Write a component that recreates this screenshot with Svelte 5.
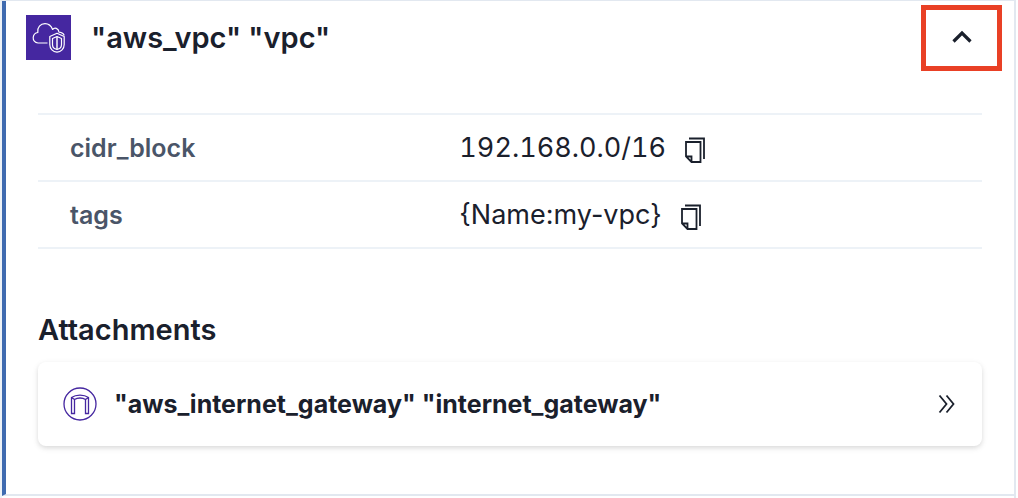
<script>
  const attributes = [
    { name: 'cidr_block', value: '192.168.0.0/16', numeric: true },
    { name: 'tags', value: '{Name:my-vpc}', numeric: false }
  ];
  let open = $state(true);
</script>

<div class="panel">
  <main class="resource">
    <header>
      <svg class="logo" viewBox="0 0 45 45" aria-hidden="true">
        <rect width="45" height="45" fill="#4527a0" />
        <g fill="none" stroke="#fff" stroke-width="1.2" stroke-linejoin="round">
          <path d="M21.500 28H12C8.800 27.500 7 25 7.200 22.500C7.500 19.500 9.500 17.800 11.800 17.500C11 12.500 14.500 8.600 19 8.600C23 8.600 25.300 11 26.600 14.500C28.500 12.200 32.500 13 33 17.200C35.500 17.500 37.500 18.200 38.200 20.500" />
          <path d="M31 18.300L38.200 21.500V29.500C38.200 33.800 35 36.800 31 37.200C27 36.800 23.800 33.800 23.800 29.500V21.500Z" />
          <path d="M31 21.500L35.500 23.500V29.500C35.500 32.200 33.500 34 31 34.500C28.500 34 26.500 32.200 26.500 29.500V23.500Z" />
          <path d="M31 21.500V34.500" stroke-width="1.8" opacity="0.8" />
        </g>
      </svg>
      <h1>"aws_vpc" "vpc"</h1>
      <button class="toggle" aria-label="Toggle details" aria-expanded={open} onclick={() => (open = !open)}>
        <svg width="24" height="16" viewBox="0 0 24 16" aria-hidden="true">
          <path d="M3.500 11.500L12 3L20.500 11.500" fill="none" stroke="#1a202c" stroke-width="3.200" />
        </svg>
      </button>
    </header>

    {#if open}
      <div class="details">
        <table>
          <tbody>
            {#each attributes as item}
              <tr>
                <th scope="row">{item.name}</th>
                <td>
                  <div class="value">
                    <span class:numeric={item.numeric}>{item.value}</span>
                    <button class="copy" aria-label="Copy {item.name}">
                      <svg width="22" height="26" viewBox="0 0 22 26" aria-hidden="true">
                        <g fill="none" stroke="#1a202c" stroke-width="1.800">
                          <path d="M5 1.500H20V22" />
                          <path d="M2 5H16.500V25H7.500L2 19.500ZM2 19.500H7.500V25" />
                        </g>
                      </svg>
                    </button>
                  </div>
                </td>
              </tr>
            {/each}
          </tbody>
        </table>

        <h2>Attachments</h2>
        <button class="attachment">
          <svg width="34" height="34" viewBox="0 0 34 34" aria-hidden="true">
            <g fill="none" stroke="#4527a0" stroke-width="1.300">
              <circle cx="17" cy="17" r="16" />
              <path d="M8.500 26.500V10.500C13 7.300 21 7.300 25.500 10.500V26.500H22.500V12.500C19.500 10.500 14.500 10.500 11.500 12.500V26.500ZM8.500 10.500L11.500 12.500M25.500 10.500L22.500 12.500" />
            </g>
          </svg>
          <span>"aws_internet_gateway" "internet_gateway"</span>
          <svg class="more" width="18" height="20" viewBox="0 0 18 20" aria-hidden="true">
            <path d="M1.500 1.500L8.500 10L1.500 18.500M8.500 1.500L15.500 10L8.500 18.500" fill="none" stroke="#1a202c" stroke-width="1.800" />
          </svg>
        </button>
      </div>
    {/if}
  </main>
</div>

<style>
  :global(body) {
    margin: 0;
    background: #fff;
  }

  .panel {
    box-sizing: border-box;
    min-height: 100vh;
    margin-right: 2px;
    border: 0 solid #e2e8f0;
    border-width: 1px 2px 0;
    border-left-color: #edf2f7;
    background: #fff;
    color: #1a202c;
    font-family: Inter, 'Liberation Sans', sans-serif;
  }

  .resource {
    border-bottom: 2px solid #e2e8f0;
    border-left: 4px solid #3f6bb0;
  }

  button {
    margin: 0;
    padding: 0;
    border: 0;
    background: none;
    color: inherit;
    font: inherit;
    cursor: pointer;
  }

  svg {
    display: block;
    flex: none;
  }

  header {
    display: flex;
    align-items: flex-start;
    padding: 4px 12px 0 20px;
  }

  .logo {
    width: 45px;
    height: 45px;
    margin-top: 10px;
  }

  h1,
  h2 {
    font-size: 29px;
    line-height: 42px;
    font-weight: 600;
  }

  h1 {
    flex: 1;
    margin: 12px 0 0 20px;
  }

  h2 {
    margin: 60px 0 11px;
  }

  .toggle {
    display: grid;
    place-items: center;
    box-sizing: border-box;
    width: 81px;
    height: 66px;
    border: 5px solid #e94025;
  }

  .details {
    padding: 42px 32px 48px;
  }

  table {
    width: 100%;
    border-collapse: collapse;
    border-top: 2px solid #edf2f7;
    table-layout: fixed;
  }

  tr {
    border-bottom: 2px solid #edf2f7;
  }

  th,
  td {
    height: 65px;
    padding: 0;
    text-align: left;
  }

  th {
    box-sizing: border-box;
    width: 44%;
    padding-left: 32px;
    color: #4a5568;
    font-size: 25px;
    font-weight: 600;
  }

  .value {
    display: flex;
    align-items: center;
    gap: 18px;
    padding-left: 6px;
    font-size: 27px;
    line-height: 42px;
  }

  .numeric {
    font-variant-numeric: tabular-nums;
  }

  .copy {
    padding-top: 4px;
  }

  .attachment {
    display: flex;
    align-items: center;
    width: 100%;
    height: 84px;
    padding: 0 26px 0 25px;
    border-radius: 8px;
    box-shadow: 0 2px 6px rgba(0, 0, 0, 0.1), 0 2px 4px rgba(0, 0, 0, 0.06);
    font-size: 25px;
    font-weight: 700;
    text-align: left;
  }

  .attachment span {
    flex: 1;
    margin-left: 17px;
  }
</style>
